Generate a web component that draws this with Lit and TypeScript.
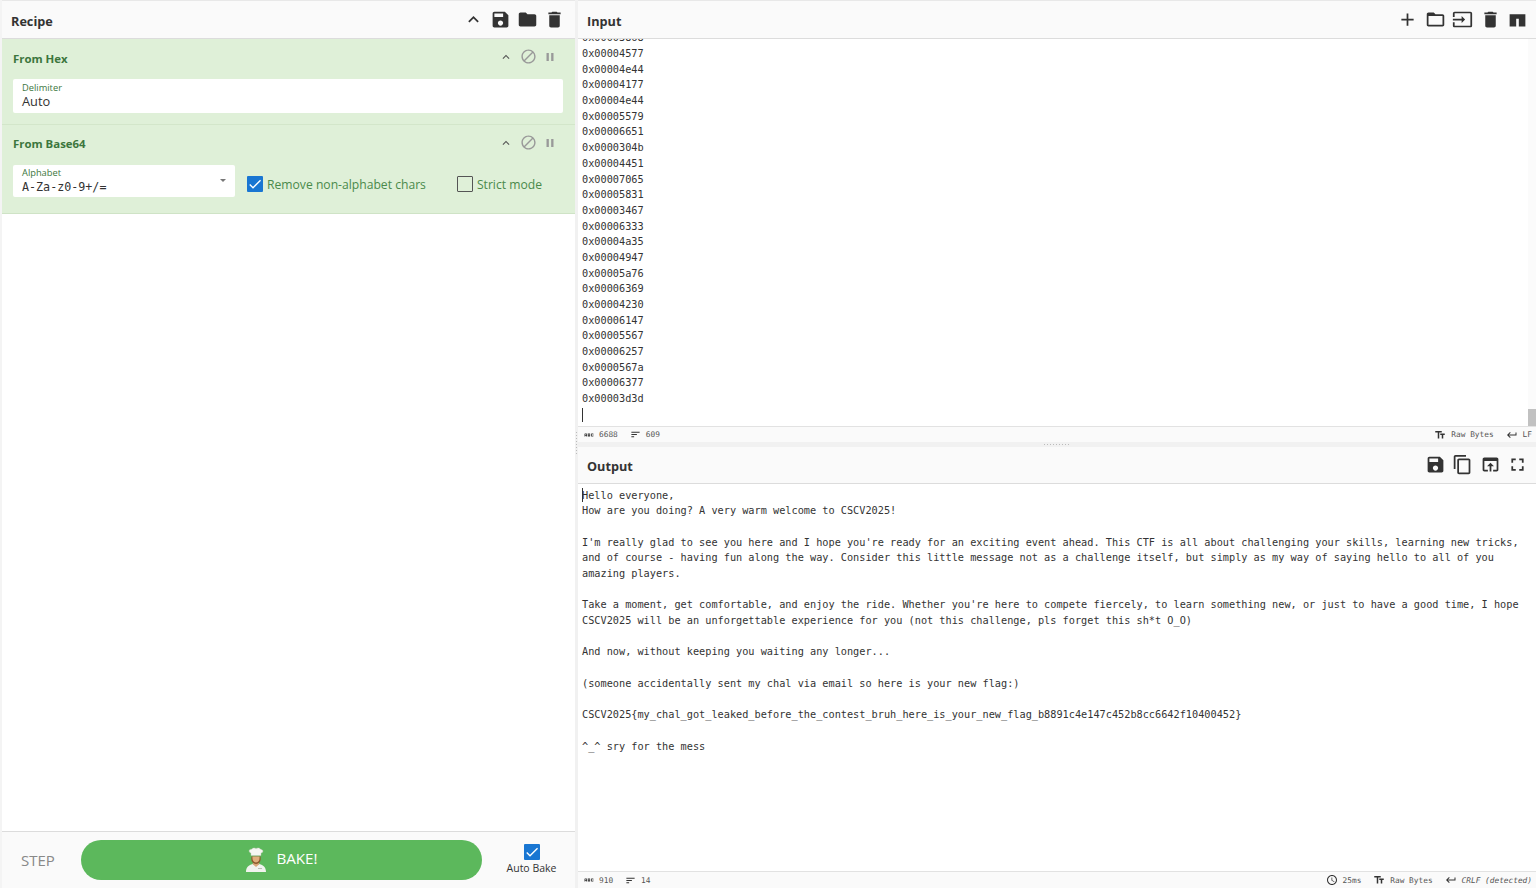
import { LitElement, html, css, svg } from "lit";
import { customElement } from "lit/decorators.js";

const P = {
  up: "M7.41 15.41L12 10.83l4.59 4.58L18 14l-6-6-6 6z",
  save: "M17 3H5c-1.11 0-2 .9-2 2v14c0 1.1.89 2 2 2h14c1.1 0 2-.9 2-2V7l-4-4zm-5 16c-1.66 0-3-1.34-3-3s1.34-3 3-3 3 1.34 3 3-1.34 3-3 3zm3-10H5V5h10v4z",
  folder: "M10 4H4c-1.1 0-1.99.9-1.99 2L2 18c0 1.1.9 2 2 2h16c1.1 0 2-.9 2-2V8c0-1.1-.9-2-2-2h-8l-2-2z",
  del: "M6 19c0 1.1.9 2 2 2h8c1.1 0 2-.9 2-2V7H6v12zM19 4h-3.5l-1-1h-5l-1 1H5v2h14V4z",
  block: "M12 2C6.48 2 2 6.48 2 12s4.48 10 10 10 10-4.48 10-10S17.52 2 12 2zM4 12c0-4.42 3.58-8 8-8 1.85 0 3.55.63 4.9 1.69L5.69 16.9C4.63 15.55 4 13.85 4 12zm8 8c-1.85 0-3.55-.63-4.9-1.69L18.31 7.1C19.37 8.45 20 10.15 20 12c0 4.42-3.58 8-8 8z",
  pause: "M6 19h4V5H6v14zm8-14v14h4V5h-4z",
  add: "M19 13h-6v6h-2v-6H5v-2h6V5h2v6h6v2z",
  folderO: "M20 6h-8l-2-2H4c-1.1 0-1.99.9-1.99 2L2 18c0 1.1.9 2 2 2h16c1.1 0 2-.9 2-2V8c0-1.1-.9-2-2-2zm0 12H4V8h16v10z",
  input: "M21 3.01H3c-1.1 0-2 .9-2 2V9h2V4.99h18v14.03H3V15H1v4.01c0 1.1.9 1.98 2 1.98h18c1.1 0 2-.88 2-1.98v-14c0-1.11-.9-2-2-2zM11 16l4-4-4-4v3H1v2h10v3z",
  tabs: "M3 6h18v14h-7.500v-9h-3v9H3z",
  copy: "M16 1H4c-1.1 0-2 .9-2 2v14h2V3h12V1zm3 4H8c-1.1 0-2 .9-2 2v14c0 1.1.9 2 2 2h11c1.1 0 2-.9 2-2V7c0-1.1-.9-2-2-2zm0 16H8V7h11v14z",
  open: "M19 4H5c-1.11 0-2 .9-2 2v12c0 1.1.89 2 2 2h4v-2H5V8h14v10h-4v2h4c1.1 0 2-.9 2-2V6c0-1.1-.89-2-2-2zm-7 6l-4 4h3v6h2v-6h3l-4-4z",
  full: "M7 14H5v5h5v-2H7v-3zm-2-4h2V7h3V5H5v5zm12 7h-3v2h5v-5h-2v3zM14 5v2h3v3h2V5h-5z",
  clock: "M11.99 2C6.47 2 2 6.48 2 12s4.47 10 9.99 10C17.52 22 22 17.52 22 12S17.52 2 11.99 2zM12 20c-4.42 0-8-3.58-8-8s3.58-8 8-8 8 3.58 8 8-3.58 8-8 8zm.5-13H11v6l5.25 3.15.75-1.23-4.5-2.67z",
  tt: "M2.5 4v3h5v12h3V7h5V4h-13zm19 5h-9v3h3v7h3v-7h3V9z",
  ret: "M19 7v4H5.83l3.58-3.59L8 6l-6 6 6 6 1.41-1.41L5.83 13H21V7z",
  abc: "M21 11h-1.5v-.5h-2v3h2V13H21v1c0 .55-.45 1-1 1h-3c-.55 0-1-.45-1-1v-4c0-.55.45-1 1-1h3c.55 0 1 .45 1 1v1zM8 10v5H6.5v-1.5h-2V15H3v-5c0-.55.45-1 1-1h3c.55 0 1 .45 1 1zm-1.5.5h-2V12h2v-1.5zm7 1.5c.55 0 1 .45 1 1v1c0 .55-.45 1-1 1h-4V9h4c.55 0 1 .45 1 1v1c0 .55-.45 1-1 1zM11 10.5v.75h2v-.75h-2zm2 2.25h-2v.75h2v-.75z",
  sort: "M3 18h6v-2H3v2zM3 6v2h18V6H3zm0 7h12v-2H3v2z",
  check: "M9 16.2L4.8 12l-1.4 1.4L9 19 21 7l-1.4-1.4z",
};

const ic = (d: string, cls = "") => html`<svg class="ic ${cls}" viewBox="0 0 24 24"><path d=${d}></path></svg>`;

const HEX = `0x00003868 0x00004577 0x00004e44 0x00004177 0x00004e44 0x00005579 0x00006651 0x0000304b 0x00004451 0x00007065 0x00005831 0x00003467 0x00006333 0x00004a35 0x00004947 0x00005a76 0x00006369 0x00004230 0x00006147 0x00005567 0x00006257 0x0000567a 0x00006377 0x00003d3d`.split(" ");

const OUT = [
  "How are you doing? A very warm welcome to CSCV2025!",
  "",
  "I'm really glad to see you here and I hope you're ready for an exciting event ahead. This CTF is all about challenging your skills, learning new tricks,",
  "and of course - having fun along the way. Consider this little message not as a challenge itself, but simply as my way of saying hello to all of you",
  "amazing players.",
  "",
  "Take a moment, get comfortable, and enjoy the ride. Whether you're here to compete fiercely, to learn something new, or just to have a good time, I hope",
  "CSCV2025 will be an unforgettable experience for you (not this challenge, pls forget this sh*t O_O)",
  "",
  "And now, without keeping you waiting any longer...",
  "",
  "(someone accidentally sent my chal via email so here is your new flag:)",
  "",
  "CSCV2025{my_chal_got_leaked_before_the_contest_bruh_here_is_your_new_flag_b8891c4e147c452b8cc6642f10400452}",
  "",
  "^_^ sry for the mess",
];

const chef = svg`
  <svg class="chef" viewBox="0 0 22 26">
    <path d="M1 25c0-5 3-7 6.5-8l3.5 1.5 3.500-1.500c3.500 1 6.500 3 6.500 8z" fill="#f1f3ee"/>
    <path d="M7.500 17l3.500 3 3.500-3-1-2h-5z" fill="#d9a679"/>
    <path d="M6.500 9.500h9c.5 3 .2 7-4.500 7.500-4.700-.5-5-4.500-4.500-7.500z" fill="#8a5a2c"/>
    <path d="M7.500 9.500h7c.3 3-.5 5.500-3.500 6-3-.5-3.800-3-3.500-6z" fill="#e0ad7c"/>
    <path d="M6 8.500V6C3.500 5.500 3.500 2 6.500 2.200 8 .5 10 .8 11 1.500c1.500-1 4-.8 5 1 2.500.2 2.500 3 0 3.500v2.500z" fill="#f6f6f2" stroke="#c9c9c0" stroke-width=".4"/>
    <path d="M13 21h4v1h-4z" fill="#b8beb4"/>
  </svg>`;

@customElement("app-root")
export class AppRoot extends LitElement {
  static styles = css`
    :host {
      display: block;
      width: 1536px;
      height: 888px;
      overflow: hidden;
      background: #fff;
      font-family: "Open Sans", "Noto Sans", sans-serif;
      color: #333;
    }
    * { box-sizing: border-box; }
    .app { display: flex; height: 888px; }
    .gutter-v {
      flex: none;
      width: 3px;
      background: #f1f1f1;
      display: flex;
      align-items: center;
      justify-content: center;
    }
    .gutter-v.first { width: 2px; background: #f4f4f4; }
    .gutter-v i {
      display: block;
      width: 1px;
      height: 24px;
      background: repeating-linear-gradient(#bbb 0 1px, transparent 1px 3px);
    }
    .recipe { flex: none; width: 573px; display: flex; flex-direction: column; }
    .head {
      flex: none;
      height: 39px;
      padding-top: 2px;
      display: flex;
      align-items: center;
      background: #fafafa;
      border-top: 1px solid #e8e8e8;
      border-bottom: 1px solid #dcdcdc;
      font-size: 12.700px;
      font-weight: 700;
      color: #333;
    }
    .recipe .head { padding-left: 9px; }
    .head-title { flex: 1; }
    .main .head-title { padding-left: 9px; }
    .btns { display: flex; align-items: center; margin-top: -3px; }
    .ic { display: block; fill: currentColor; flex: none; }
    .btns .ic { width: 21px; height: 21px; }
    .rb .ic { margin-left: 6px; }
    .rb { padding-right: 10px; color: #333; }
    .rb .ic:first-child { margin-left: 0; width: 21px; height: 21px; }
    .mb { padding-right: 8px; }
    .mb .ic { margin-left: 6.500px; }
    .op {
      flex: none;
      background: #dff0d8;
      border-bottom: 1px solid #d3e6ca;
      color: #3c763d;
      padding: 0 11px;
    }
    .op-hex { height: 86px; }
    .op-b64 { height: 89px; border-bottom-color: #cfe3c6; }
    .op-top { display: flex; align-items: center; height: 40px; }
    .op-b64 .op-top { padding-bottom: 2px; }
    .op-name { flex: 1; font-size: 11.400px; font-weight: 700; margin-bottom: 2px; }
    .op-btns { display: flex; align-items: center; gap: 5px; color: #999; margin-right: 7px; margin-top: -5px; }
    .op-b64 .op-btns { margin-top: -3px; }
    .op-btns .ic { width: 17px; height: 17px; }
    .op-btns .ic.a { color: #555; width: 14px; height: 14px; margin-right: 2px; }
    .op-btns .ic.p { width: 14px; height: 14px; margin-left: 1px; }
    .field {
      background: #fff;
      border-radius: 2px;
      padding: 3px 10px 0 9px;
      font-size: 12.800px;
      color: #333;
      position: relative;
    }
    .field label { display: block; font-size: 9.300px; line-height: 11px; color: #3c763d; }
    .val { line-height: 17px; }
    .f1 { height: 34px; margin-right: 1px; }
    .row { display: flex; align-items: center; }
    .f2 { width: 222px; height: 32px; flex: none; padding-top: 2px; }
    .f2 label { line-height: 12px; }
    .f2 .val { font-family: "DejaVu Sans Mono", monospace; font-size: 11.700px; line-height: 17px; }
    .caret-dd {
      position: absolute;
      right: 9px;
      top: 14px;
      width: 0;
      height: 0;
      border-left: 3px solid transparent;
      border-right: 3px solid transparent;
      border-top: 3px solid #777;
    }
    .cb { width: 16px; height: 16px; flex: none; border-radius: 1px; color: #fff; }
    .cb.on { background: #1976d2; }
    .cb.off { border: 1.500px solid #555; }
    .cb .ic { width: 16px; height: 16px; }
    .cl { font-size: 12.150px; margin: 6px 0 0 4px; color: #4a8a4b; }
    .c1 { margin: 6px 0 0 12px; }
    .c2 { margin: 6px 0 0 31px; }
    .spacer { flex: 1; background: #fff; }
    .bake {
      flex: none;
      height: 57px;
      border-top: 1px solid #dcdcdc;
      background: #fafafa;
      display: flex;
      align-items: center;
      padding-left: 19px;
    }
    .step { width: 60px; font-size: 15px; color: #888; }
    .go {
      width: 401px;
      height: 40px;
      margin-top: -1px;
      border-radius: 20px;
      background: #5cb85c;
      color: #fff;
      display: flex;
      align-items: center;
      justify-content: center;
      font-size: 15.200px;
      gap: 9px;
    }
    .go span { margin-top: -3px; }
    .chef { width: 22px; height: 26px; display: block; }
    .auto {
      flex: 1;
      display: flex;
      flex-direction: column;
      align-items: center;
      font-size: 10.500px;
      color: #333;
      padding-left: 6px;
      gap: 1px;
      margin-top: -2px;
    }
    .main { flex: 1; display: flex; flex-direction: column; min-width: 0; }
    .mono {
      font-family: "DejaVu Sans Mono", monospace;
      font-size: 10.240px;
      line-height: 15.700px;
      color: #333;
    }
    .input-body {
      flex: none;
      height: 387px;
      display: flex;
      overflow: hidden;
    }
    .lines {
      flex: 1;
      display: flex;
      flex-direction: column;
      justify-content: flex-end;
      padding: 0 0 3.500px 4px;
    }
    .lines div { flex: none; height: 15.700px; white-space: pre; }
    .lines .caret { vertical-align: -4px; }
    .sb { flex: none; width: 8px; background: #fbfbfb; display: flex; align-items: flex-end; }
    .sb i { display: block; width: 100%; height: 17px; background: #c1c1c1; }
    .status {
      flex: none;
      height: 16px;
      display: flex;
      align-items: center;
      background: #fafafa;
      border-top: 1px solid #e2e2e2;
      font-family: "DejaVu Sans Mono", monospace;
      font-size: 7.800px;
      color: #555;
      padding: 0 4px 0 5px;
    }
    .status .ic { width: 12px; height: 12px; color: #333; }
    .status .abc { width: 12px; height: 12px; margin-right: 4px; }
    .status .sort { margin: 0 5px 0 12px; width: 11px; height: 11px; }
    .status .fill { flex: 1; }
    .status .tt { margin-right: 5px; }
    .status .ret { margin: 0 5px 0 12px; }
    .status .clock { margin-right: 5px; }
    .status .gap { margin-right: 12px; }
    .gutter-h {
      flex: none;
      height: 5px;
      background: #f1f1f1;
      display: flex;
      justify-content: center;
      align-items: center;
    }
    .gutter-h i {
      display: block;
      width: 26px;
      height: 1px;
      background: repeating-linear-gradient(90deg, #bbb 0 1px, transparent 1px 3px);
    }
    .main .head.out { height: 37px; border-top: 0; padding-top: 2px; }
    .out-body { flex: 1; padding: 3.500px 0 0 4px; overflow: hidden; }
    .out-body div { height: 15.700px; white-space: pre; }
    .caret {
      display: inline-block;
      width: 1px;
      height: 14px;
      margin-right: -1px;
      background: #333;
      vertical-align: -3px;
    }
    .out-status { height: 17px; }
  `;

  render() {
    return html`
      <div class="app">
        <div class="gutter-v first"></div>
        <section class="recipe">
          <header class="head">
            <div class="head-title">Recipe</div>
            <div class="btns rb">${ic(P.up)}${ic(P.save)}${ic(P.folder)}${ic(P.del)}</div>
          </header>
          <div class="op op-hex">
            <div class="op-top">
              <div class="op-name">From Hex</div>
              <div class="op-btns">${ic(P.up, "a")}${ic(P.block)}${ic(P.pause, "p")}</div>
            </div>
            <div class="field f1">
              <label>Delimiter</label>
              <div class="val">Auto</div>
            </div>
          </div>
          <div class="op op-b64">
            <div class="op-top">
              <div class="op-name">From Base64</div>
              <div class="op-btns">${ic(P.up, "a")}${ic(P.block)}${ic(P.pause, "p")}</div>
            </div>
            <div class="row">
              <div class="field f2">
                <label>Alphabet</label>
                <div class="val">A-Za-z0-9+/=</div>
                <i class="caret-dd"></i>
              </div>
              <div class="cb on c1">${ic(P.check)}</div>
              <div class="cl">Remove non-alphabet chars</div>
              <div class="cb off c2"></div>
              <div class="cl">Strict mode</div>
            </div>
          </div>
          <div class="spacer"></div>
          <div class="bake">
            <div class="step">STEP</div>
            <div class="go">${chef}<span>BAKE!</span></div>
            <div class="auto">
              <div class="cb on">${ic(P.check)}</div>
              <div>Auto Bake</div>
            </div>
          </div>
        </section>
        <div class="gutter-v"><i></i></div>
        <section class="main">
          <header class="head">
            <div class="head-title">Input</div>
            <div class="btns mb">${ic(P.add)}${ic(P.folderO)}${ic(P.input)}${ic(P.del)}${ic(P.tabs)}</div>
          </header>
          <div class="input-body">
            <div class="lines mono">
              ${HEX.map((l) => html`<div>${l}</div>`)}
              <div><span class="caret"></span></div>
            </div>
            <div class="sb"><i></i></div>
          </div>
          <div class="status">
            ${ic(P.abc, "abc")}<span>6688</span>${ic(P.sort, "sort")}<span>609</span>
            <span class="fill"></span>
            ${ic(P.tt, "tt")}<span>Raw Bytes</span>${ic(P.ret, "ret")}<span>LF</span>
          </div>
          <div class="gutter-h"><i></i></div>
          <header class="head out">
            <div class="head-title">Output</div>
            <div class="btns mb">${ic(P.save)}${ic(P.copy)}${ic(P.open)}${ic(P.full)}</div>
          </header>
          <div class="out-body mono">
            <div><span class="caret"></span>Hello everyone,</div>
            ${OUT.map((l) => html`<div>${l}</div>`)}
          </div>
          <div class="status out-status">
            ${ic(P.abc, "abc")}<span>910</span>${ic(P.sort, "sort")}<span>14</span>
            <span class="fill"></span>
            ${ic(P.clock, "clock")}<span class="gap">25ms</span>
            ${ic(P.tt, "tt")}<span>Raw Bytes</span>${ic(P.ret, "ret")}<em>CRLF (detected)</em>
          </div>
        </section>
      </div>
    `;
  }
}
